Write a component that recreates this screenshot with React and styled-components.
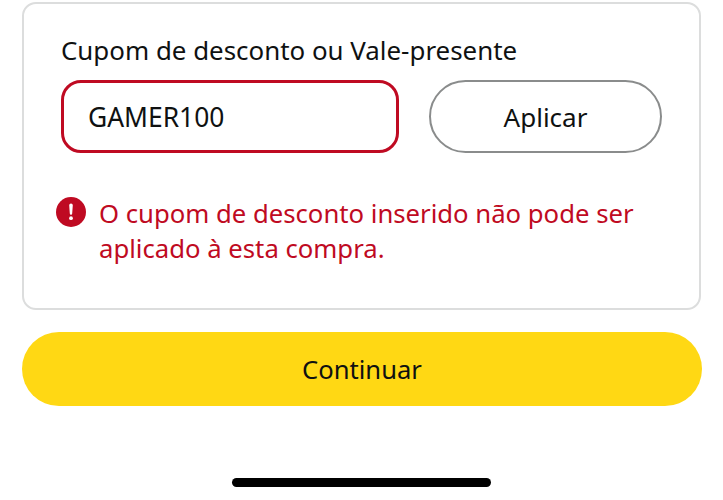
import React from "react"
import styled, { createGlobalStyle } from "styled-components"

const GlobalStyle = createGlobalStyle`
  html, body {
    margin: 0;
    padding: 0;
    background: #fff;
    font-family: "Noto Sans", "Liberation Sans", sans-serif;
    color: #0f1111;
  }
`

const Page = styled.div`
  width: 723px;
  height: 500px;
  box-sizing: border-box;
  padding: 2px 22px 0;
  display: flex;
  flex-direction: column;
  overflow: hidden;
`

const Card = styled.section`
  height: 308px;
  box-sizing: border-box;
  border: 2px solid #dcdddd;
  border-radius: 14px;
  padding: 29px 37px 0 37px;
`

const Label = styled.div`
  font-size: 25.9px;
  line-height: 34px;
  margin-bottom: 13px;
`

const CouponRow = styled.div`
  display: flex;
  justify-content: space-between;
  align-items: stretch;
  height: 73px;
`

const CouponInput = styled.div`
  width: 338px;
  box-sizing: border-box;
  border: 3px solid #bf0a22;
  border-radius: 20px;
  padding-left: 24px;
  display: flex;
  align-items: center;
  font-size: 26.4px;
`

const ApplyButton = styled.button`
  width: 233px;
  box-sizing: border-box;
  background: #fff;
  border: 2px solid #8a8c8c;
  border-radius: 37px;
  font: inherit;
  font-size: 26px;
  color: #0f1111;
  padding: 0;
`

const ErrorRow = styled.div`
  display: flex;
  align-items: flex-start;
  gap: 13px;
  margin: 43px 0 0 -5px;
  color: #bf0a22;
  font-size: 25.7px;
  line-height: 35px;
`

const ErrorIcon = styled.svg`
  flex: none;
  width: 30px;
  height: 30px;
  margin-top: 1px;
`

const ContinueButton = styled.button`
  margin-top: 22px;
  height: 74px;
  flex: none;
  width: 680px;
  border: 0;
  border-radius: 37px;
  background: #ffd814;
  font: inherit;
  font-size: 25.6px;
  color: #0f1111;
  padding: 0;
`

const HomeBar = styled.div`
  width: 259px;
  height: 9px;
  margin: 72px 0 0 210px;
  border-radius: 5px;
  background: #000;
  flex: none;
`

export default function App() {
  return (
    <Page>
      <GlobalStyle />
      <Card>
        <Label>Cupom de desconto ou Vale-presente</Label>
        <CouponRow>
          <CouponInput>GAMER100</CouponInput>
          <ApplyButton>Aplicar</ApplyButton>
        </CouponRow>
        <ErrorRow>
          <ErrorIcon viewBox="0 0 30 30">
            <circle cx="15" cy="15" r="15" fill="#bf0a22" />
            <path d="M13.2 8.2a1.8 1.8 0 0 1 3.6 0l-.6 8.3a1.2 1.2 0 0 1-2.4 0z" fill="#fff" />
            <circle cx="15" cy="21.2" r="1.9" fill="#fff" />
          </ErrorIcon>
          <span>O cupom de desconto inserido não pode ser aplicado à esta compra.</span>
        </ErrorRow>
      </Card>
      <ContinueButton>Continuar</ContinueButton>
      <HomeBar />
    </Page>
  )
}
